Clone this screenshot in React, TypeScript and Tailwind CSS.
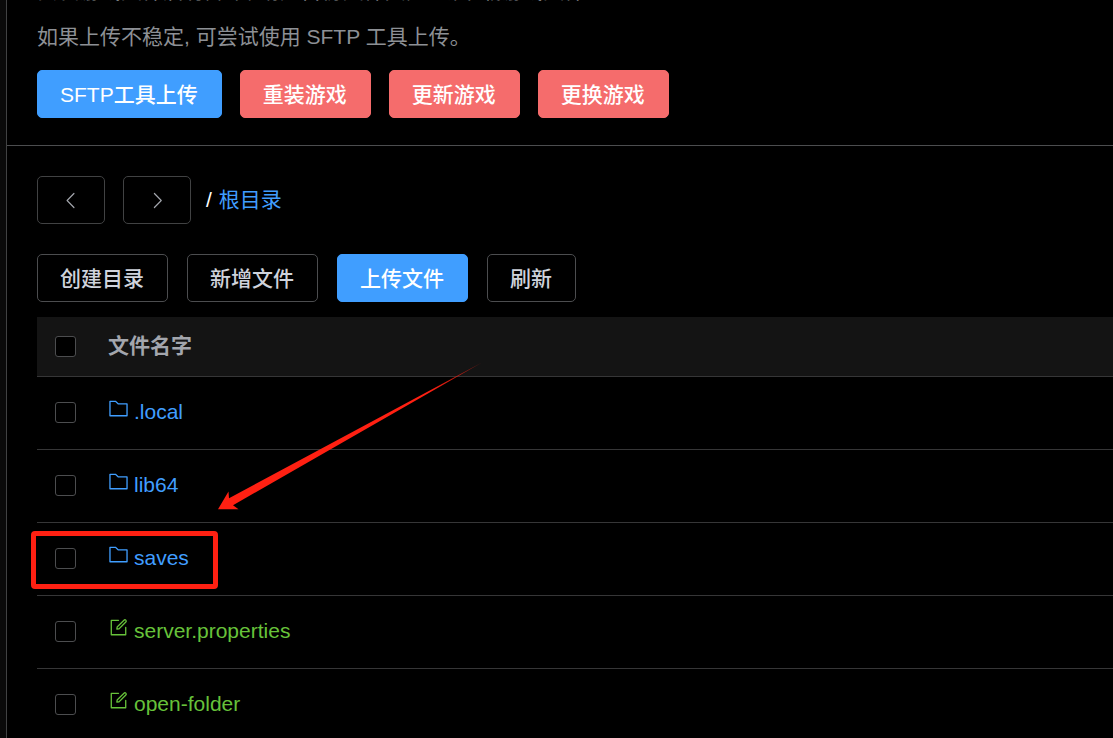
import { useState } from "react";
import type { ReactNode } from "react";

type Entry = { name: string; kind: "dir" | "file" };

const entries: Entry[] = [
  { name: ".local", kind: "dir" },
  { name: "lib64", kind: "dir" },
  { name: "saves", kind: "dir" },
  { name: "server.properties", kind: "file" },
  { name: "open-folder", kind: "file" },
];

const variants = {
  primary: "border-[#409eff] bg-[#409eff] text-white",
  danger: "border-[#f56c6c] bg-[#f56c6c] text-white",
  plain: "border-[#4c4d4f] bg-transparent text-[#cfd3dc]",
};

function Button({ variant = "plain", children }: { variant?: keyof typeof variants; children: ReactNode }) {
  return (
    <button
      type="button"
      className={`h-12 shrink-0 whitespace-nowrap rounded-[5px] border pl-[22px] pr-[23px] text-[21px] leading-none font-medium ${variants[variant]}`}
    >
      {children}
    </button>
  );
}

function Icon({ children }: { children: ReactNode }) {
  return (
    <svg viewBox="0 0 1024 1024" fill="currentColor" className="size-[21px]" aria-hidden="true">
      {children}
    </svg>
  );
}

function NavButton({ label, children }: { label: string; children: ReactNode }) {
  return (
    <button
      type="button"
      aria-label={label}
      className="flex h-12 w-[68px] items-center justify-center rounded-[5px] border border-[#414243] text-[#a3a6ad]"
    >
      {children}
    </button>
  );
}

function FolderIcon() {
  return (
    <Icon>
      <path d="M128 192v640h768V320H485.76L357.504 192H128zm-32-64h287.872l128.384 128H928a32 32 0 0 1 32 32v576a32 32 0 0 1-32 32H96a32 32 0 0 1-32-32V160a32 32 0 0 1 32-32z" />
    </Icon>
  );
}

function EditIcon() {
  return (
    <Icon>
      <path d="M832 512a32 32 0 1 1 64 0v352a32 32 0 0 1-32 32H160a32 32 0 0 1-32-32V160a32 32 0 0 1 32-32h352a32 32 0 0 1 0 64H192v640h640V512z" />
      <path d="m469.952 554.24 52.8-7.552L847.104 222.4a32 32 0 1 0-45.248-45.248L477.44 501.44l-7.552 52.8zm422.4-422.4a96 96 0 0 1 0 135.808l-331.84 331.84a32 32 0 0 1-18.112 9.088L436.8 623.68a32 32 0 0 1-36.224-36.224l15.104-105.6a32 32 0 0 1 9.024-18.112l331.904-331.84a96 96 0 0 1 135.744 0z" />
    </Icon>
  );
}

function Checkbox({ label, checked, onChange }: { label: string; checked: boolean; onChange: () => void }) {
  return (
    <input
      type="checkbox"
      aria-label={label}
      checked={checked}
      onChange={onChange}
      className="block size-[21px] appearance-none rounded-[3px] border border-[#4c4d4f] bg-black checked:border-[#409eff] checked:bg-[#409eff]"
    />
  );
}

/* Arrow and frame pointing at the saves directory */
function Callout() {
  return (
    <div className="pointer-events-none absolute inset-0">
      <svg className="absolute left-[181px] top-[45px]" width="265" height="149" viewBox="218 362 265 149" aria-hidden="true">
        <defs>
          <linearGradient id="tail" x1="0" y1="1" x2="1" y2="0">
            <stop offset="0.8" stopColor="#ff2012" />
            <stop offset="1" stopColor="#ff2012" stopOpacity="0.5" />
          </linearGradient>
        </defs>
        <path d="M218 509.300L228.500 491.500L229 498.200L482 362.500L233 505.300L238.500 509.300Z" fill="url(#tail)" />
      </svg>
      <div className="absolute -left-[6px] top-[214px] h-[58px] w-[187px] rounded-[4px] border-[5px] border-[#ff2012]" />
    </div>
  );
}

export default function App() {
  const [selected, setSelected] = useState<string[]>([]);
  const allSelected = selected.length === entries.length;

  const toggle = (name: string) =>
    setSelected(s => (s.includes(name) ? s.filter(n => n !== name) : [...s, name]));

  return (
    <div className="flex h-screen overflow-hidden bg-black font-['Liberation_Sans','Noto_Sans_CJK_SC',sans-serif] text-[21px]">
      <aside className="w-[7px] shrink-0 border-r border-[#414243] bg-[#0a0a0a]" />

      <main className="min-w-0 flex-1 overflow-hidden">
        <section className="border-b border-[#4c4d4f] pb-[27px] pl-[30px]">
          <div className="-mt-8 leading-[46px] text-[#8d9095]">
            <p>安装游戏文件后有异常, 请先备份文件夹, 重新下载游戏文件。</p>
            <p>如果上传不稳定, 可尝试使用 SFTP 工具上传。</p>
          </div>
          <div className="mt-[10px] flex gap-[18px]">
            <Button variant="primary">SFTP工具上传</Button>
            <Button variant="danger">重装游戏</Button>
            <Button variant="danger">更新游戏</Button>
            <Button variant="danger">更换游戏</Button>
          </div>
        </section>

        <section className="pl-[30px] pt-[30px]">
          <nav className="flex items-center">
            <div className="flex gap-[18px]">
              <NavButton label="后退">
                <Icon>
                  <path d="M609.408 149.376 277.76 489.6a32 32 0 0 0 0 44.672l331.648 340.352a29.12 29.12 0 0 0 41.728 0 30.592 30.592 0 0 0 0-42.752L339.264 511.936l311.872-319.872a30.592 30.592 0 0 0 0-42.688 29.12 29.12 0 0 0-41.728 0z" />
                </Icon>
              </NavButton>
              <NavButton label="前进">
                <Icon>
                  <path d="M340.864 149.312a30.592 30.592 0 0 0 0 42.752L652.736 512 340.864 831.872a30.592 30.592 0 0 0 0 42.752 29.12 29.12 0 0 0 41.728 0L714.24 534.336a32 32 0 0 0 0-44.672L382.592 149.376a29.12 29.12 0 0 0-41.728 0z" />
                </Icon>
              </NavButton>
            </div>
            <span className="ml-[15px] text-white">/</span>
            <a href="#root" className="ml-[7px] text-[#409eff]">根目录</a>
          </nav>

          <div className="mt-[30px] flex gap-[19px]">
            <Button>创建目录</Button>
            <Button>新增文件</Button>
            <Button variant="primary">上传文件</Button>
            <Button>刷新</Button>
          </div>

          <div className="relative mt-[15px]">
            <table className="w-full border-separate border-spacing-0 text-left">
              <thead>
                <tr className="h-[60px] bg-[#141414]">
                  <th className="w-[71px] border-b border-[#363637] pl-[18px]">
                    <Checkbox
                      label="全选"
                      checked={allSelected}
                      onChange={() => setSelected(allSelected ? [] : entries.map(e => e.name))}
                    />
                  </th>
                  <th className="border-b border-[#363637] pb-[2px] font-bold text-[#a3a6ad]">文件名字</th>
                </tr>
              </thead>
              <tbody>
                {entries.map(({ name, kind }) => (
                  <tr key={name} className="h-[73px]">
                    <td className="border-b border-[#363637] pb-[2px] pl-[18px]">
                      <Checkbox label={name} checked={selected.includes(name)} onChange={() => toggle(name)} />
                    </td>
                    <td className="border-b border-[#363637] pb-[2px]">
                      <a
                        href={`#${name}`}
                        className={`inline-flex items-start gap-[5px] leading-7 ${kind === "dir" ? "text-[#409eff]" : "text-[#67c23a]"}`}
                      >
                        {kind === "dir" ? <FolderIcon /> : <EditIcon />}
                        {name}
                      </a>
                    </td>
                  </tr>
                ))}
              </tbody>
            </table>
            <Callout />
          </div>
        </section>
      </main>
    </div>
  );
}
